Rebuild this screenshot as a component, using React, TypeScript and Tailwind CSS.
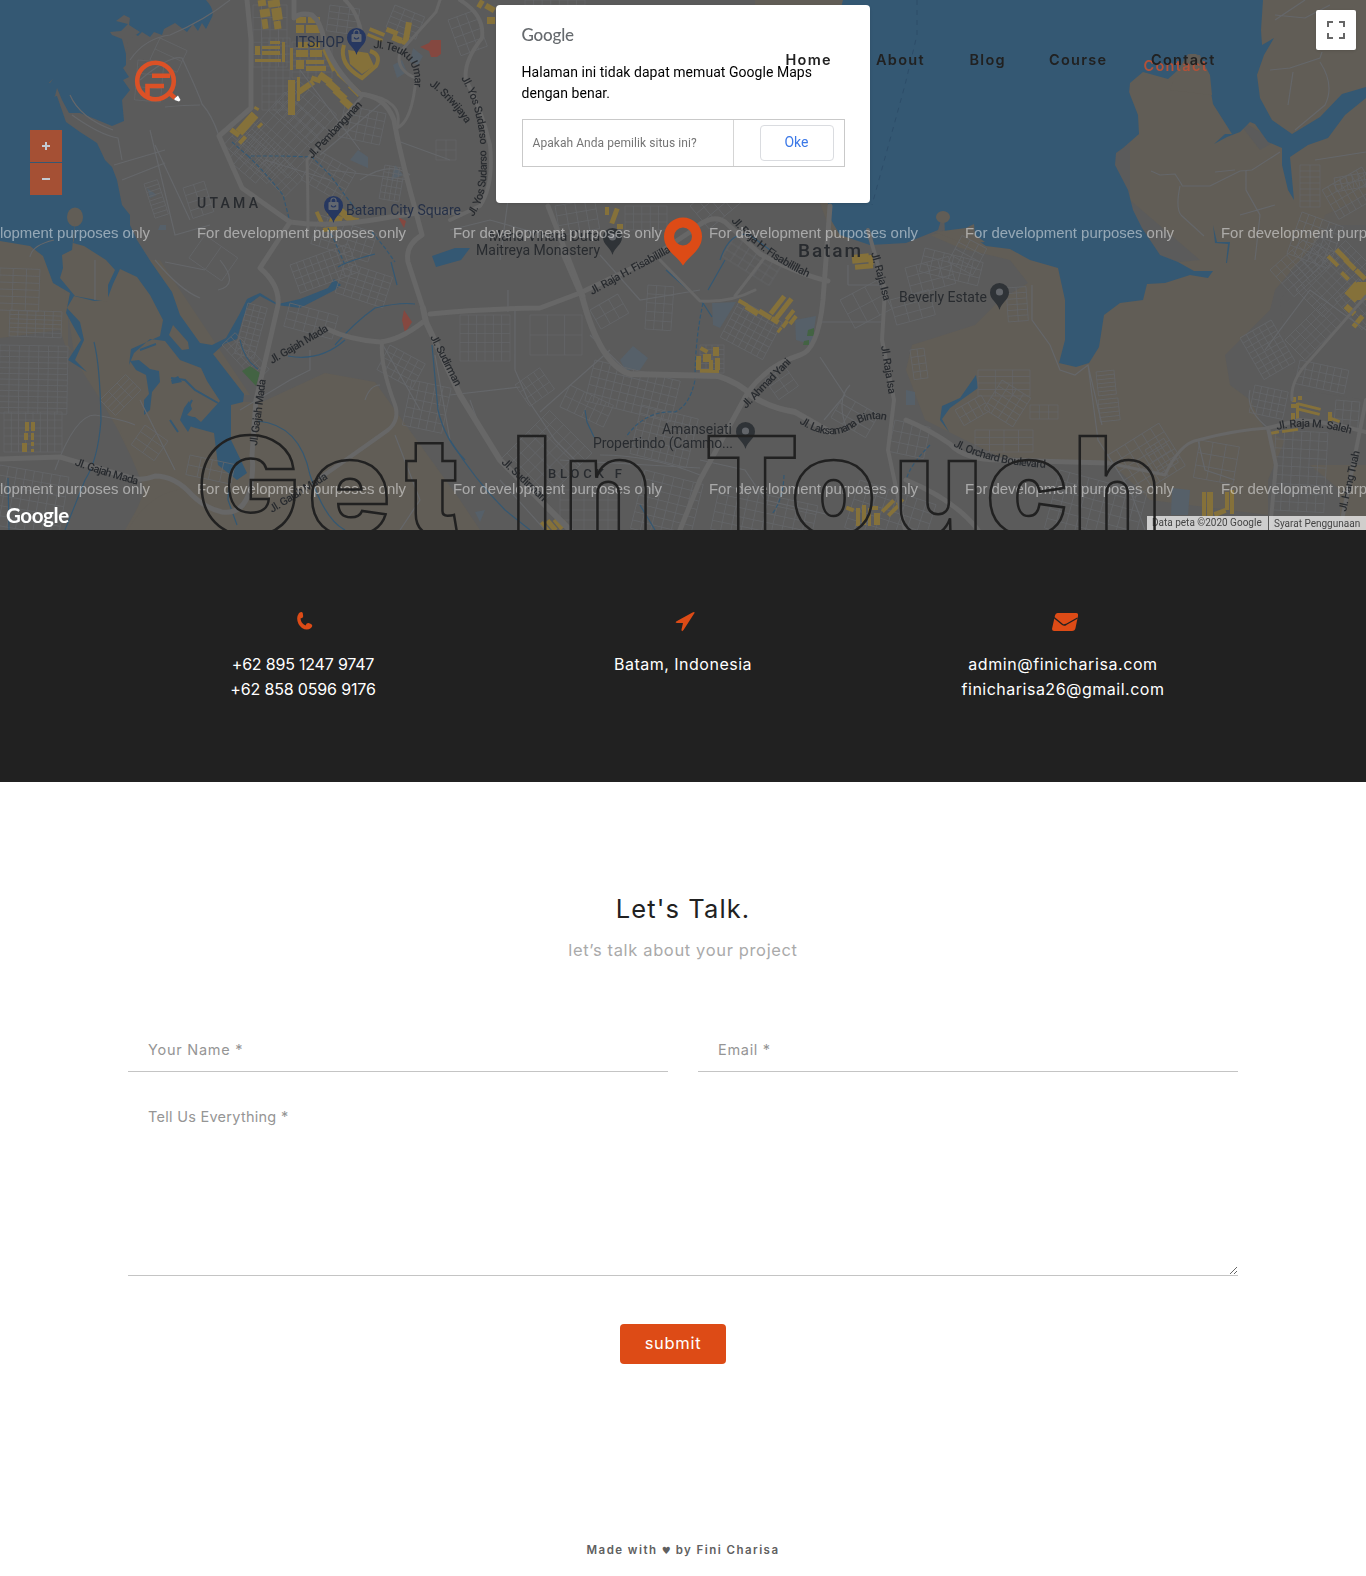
import React from "react";

const WATER = "#345873";
const TAN = "#615d56";
const LAND = "#5b5b5b";
const ROAD = "#676767";
const STREET = "#65676a";
const SHOP = "#85713a";
const INK = "#282b2f";

type BlockGrid = [x: number, y: number, w: number, h: number, angle: number, cols: number, rows: number];

/* Residential street grids: origin, size, rotation, columns, rows. */
const GRIDS: BlockGrid[] = [
  [253, 5, 34, 62, 0, 4, 5], [262, 38, 28, 72, 0, 4, 9], [292, 42, 40, 36, 0, 5, 6],
  [298, 80, 52, 38, 42, 7, 4], [248, 118, 58, 36, 42, 8, 3], [285, 92, 60, 62, 42, 8, 5],
  [228, 160, 34, 36, -50, 3, 5], [275, 150, 40, 26, 45, 6, 3], [318, 150, 44, 34, 30, 5, 5],
  [345, 105, 42, 32, 12, 5, 4], [385, 165, 20, 34, 10, 4, 5], [330, 5, 30, 26, 8, 3, 4],
  [395, 5, 32, 24, 22, 3, 4], [436, 140, 20, 20, 0, 2, 2], [183, 188, 22, 32, -18, 2, 4],
  [144, 184, 14, 36, -18, 1, 8], [320, 215, 60, 30, 18, 7, 4], [205, 235, 40, 28, 35, 2, 1],
  [248, 303, 20, 52, 15, 3, 9], [222, 345, 18, 50, -43, 3, 7], [290, 265, 62, 30, -20, 9, 4],
  [345, 262, 50, 32, 18, 6, 5], [290, 303, 50, 24, 15, 5, 3], [0, 268, 40, 42, 2, 3, 6],
  [10, 310, 52, 26, 2, 6, 6], [0, 345, 68, 68, 1, 7, 12], [4, 412, 58, 40, 0, 8, 5],
  [100, 400, 36, 22, -45, 3, 4], [0, 465, 70, 60, 10, 8, 6], [145, 425, 28, 24, 35, 2, 3],
  [190, 455, 46, 20, 12, 4, 2], [390, 345, 40, 28, 28, 5, 4], [412, 380, 40, 46, 12, 5, 5],
  [460, 315, 50, 46, 0, 6, 5], [530, 315, 52, 40, 0, 3, 2], [515, 385, 30, 26, -35, 4, 3],
  [590, 310, 32, 22, -30, 3, 2], [648, 285, 26, 44, 4, 3, 5], [595, 360, 88, 42, 14, 11, 5],
  [642, 405, 58, 50, 14, 8, 6], [570, 385, 48, 24, 25, 6, 2], [700, 345, 24, 28, 0, 4, 6],
  [740, 300, 48, 42, 28, 7, 6], [765, 380, 24, 24, -35, 2, 3], [645, 470, 60, 60, 14, 6, 7],
  [500, 460, 70, 60, -45, 7, 6], [720, 485, 100, 45, 12, 10, 5], [560, 490, 60, 40, 0, 5, 4],
  [840, 300, 42, 32, -28, 3, 2], [890, 300, 40, 26, -15, 3, 3], [844, 395, 40, 26, 30, 3, 3],
  [895, 420, 36, 32, 12, 4, 3], [905, 268, 45, 28, -15, 4, 3], [948, 262, 30, 28, -62, 4, 3],
  [1006, 288, 20, 34, -4, 2, 6], [978, 370, 52, 26, 0, 3, 4], [1002, 380, 34, 34, 32, 4, 5],
  [955, 410, 30, 18, -30, 4, 2], [1030, 405, 28, 14, 0, 3, 2], [1096, 372, 18, 24, -6, 1, 6],
  [1098, 400, 20, 22, -6, 1, 5], [910, 350, 14, 30, -8, 2, 4], [975, 430, 58, 22, 0, 4, 3],
  [1108, 455, 60, 50, -32, 6, 5], [1060, 470, 90, 60, 15, 9, 6], [1145, 450, 22, 28, -32, 2, 4],
  [1300, 165, 20, 42, 0, 2, 7], [1334, 178, 36, 14, -10, 6, 2], [1322, 190, 46, 34, -30, 7, 4],
  [1302, 212, 44, 44, 20, 6, 5], [1270, 270, 60, 36, -42, 8, 4], [1296, 290, 70, 38, -45, 10, 5],
  [1240, 338, 36, 48, -30, 5, 8], [1285, 340, 52, 28, -45, 7, 4], [1300, 360, 50, 24, 12, 7, 3],
  [1255, 385, 34, 28, 12, 5, 4], [1335, 300, 32, 40, -42, 5, 4], [1200, 440, 40, 38, 10, 3, 3],
  [1276, 430, 52, 80, 3, 6, 9], [1336, 400, 24, 28, 5, 3, 3], [925, 248, 60, 24, 14, 6, 3],
  [1290, 270, 40, 18, -42, 5, 2], [525, 0, 60, 5, 0, 7, 1], [625, 206, 42, 24, 0, 5, 3],
  [555, 206, 40, 30, -10, 4, 3], [690, 206, 50, 30, -40, 5, 3], [735, 236, 55, 24, 32, 6, 3],
  [448, 20, 28, 38, -20, 3, 4], [860, 480, 80, 50, 18, 8, 5],
  [160, 38, 30, 24, 25, 1, 2], [138, 60, 26, 40, 5, 1, 3],
];

function gridPath([, , w, h, , cols, rows]: BlockGrid) {
  let d = "";
  for (let i = 0; i <= cols; i++) d += `M${(w * i) / cols} 0V${h}`;
  for (let j = 0; j <= rows; j++) d += `M0 ${(h * j) / rows}H${w}`;
  return d;
}

type Shop = [x: number, y: number, w: number, h: number, angle?: number];
const SHOPS: Shop[] = [
  [258, 0, 8, 6, -8], [268, 0, 12, 7, -8], [260, 9, 10, 8, -8], [272, 8, 10, 12, -8], [262, 19, 6, 10, -8], [274, 21, 7, 8, -8],
  [255, 46, 5, 9], [262, 46, 18, 3], [262, 51, 18, 4], [255, 59, 26, 3], [270, 41, 10, 3], [282, 42, 3, 20],
  [296, 17, 10, 6], [308, 17, 12, 6], [296, 25, 8, 8], [306, 25, 14, 8], [298, 42, 10, 6], [310, 42, 10, 6], [296, 50, 12, 7], [310, 50, 12, 7],
  [290, 48, 3, 22], [296, 60, 8, 9], [306, 60, 18, 4], [306, 66, 20, 5], [327, 48, 4, 24, -25], [334, 62, 4, 14, -32],
  [288, 80, 7, 34], [297, 77, 3, 24], [297, 84, 18, 6, -35], [311, 77, 10, 5, 20], [318, 75, 14, 7, 35], [326, 83, 14, 7, 42],
  [333, 91, 14, 7, 42], [340, 100, 14, 7, 42], [348, 87, 14, 6, 45], [336, 76, 14, 4, 42], [288, 111, 7, 4],
  [235, 119, 24, 9, -48], [230, 130, 10, 5, 35], [238, 138, 9, 4, -48], [254, 107, 5, 3, 30], [257, 124, 6, 3, -45],
  [369, 30, 16, 4, 22], [367, 36, 16, 3, 22], [386, 29, 12, 5, 22], [392, 36, 10, 6, 22], [404, 22, 6, 23, 10], [398, 40, 10, 4, 20],
  [318, 211, 4, 16, -25], [326, 206, 8, 8, -20], [330, 215, 12, 9, 20], [343, 207, 7, 18, -50], [323, 227, 14, 4, -8], [345, 217, 14, 4, 10],
  [478, 0, 5, 8, 30], [485, 5, 10, 6, 30], [487, 17, 8, 7], [605, 207, 4, 8], [612, 208, 5, 16, 20], [617, 224, 6, 5],
  [738, 301, 10, 4, 30], [745, 307, 14, 6, 32], [758, 312, 14, 5, 32], [771, 318, 8, 5, 32], [775, 294, 5, 22, 38], [781, 296, 5, 26, 38],
  [788, 309, 4, 12, 38], [783, 320, 4, 8, 38], [791, 315, 4, 10, 38], [778, 327, 3, 6, 38],
  [700, 348, 8, 4, 30], [703, 354, 8, 8], [713, 347, 6, 9], [696, 356, 5, 14], [709, 360, 4, 13], [715, 358, 5, 12], [700, 369, 9, 4], [711, 370, 8, 3],
  [852, 254, 17, 9, -6], [855, 264, 18, 5, -5], [868, 255, 5, 10, -10],
  [25, 422, 4, 9], [31, 422, 4, 9], [24, 433, 4, 7], [31, 433, 3, 7], [22, 443, 5, 9], [31, 442, 3, 4], [31, 449, 3, 3],
  [543, 521, 4, 12, -40], [549, 519, 5, 13, -40], [556, 518, 5, 12, -40], [563, 520, 4, 8, -40],
  [846, 507, 8, 4, 20], [856, 508, 4, 18], [862, 505, 4, 20], [868, 508, 3, 18], [872, 506, 6, 4], [874, 513, 6, 12], [880, 504, 16, 4, -45], [886, 508, 16, 4, -45], [896, 500, 8, 4, -45],
  [1202, 492, 4, 24], [1207, 492, 6, 24], [1225, 492, 4, 18], [1230, 490, 4, 24], [1214, 510, 12, 5, -20],
  [1291, 404, 5, 4], [1296, 403, 3, 18], [1297, 405, 24, 3, 14], [1296, 410, 24, 3, 14], [1291, 413, 4, 9], [1292, 397, 4, 5], [1298, 396, 4, 4], [1328, 412, 4, 9], [1328, 418, 12, 3, 20], [1271, 431, 8, 3, -10], [1282, 429, 16, 3, -8],
  [1326, 259, 14, 4, 45], [1334, 253, 16, 5, 45], [1343, 262, 14, 5, 45], [1354, 272, 13, 5, 45], [1347, 285, 16, 14, -48], [1357, 282, 10, 18, 0], [1347, 304, 6, 12, -48], [1351, 319, 14, 5, -50], [1340, 274, 10, 4, 45],
];

const MAJOR_ROADS: [string, number][] = [
  ["M247 0L251 40L251 108L219 136L242 188L290 222Q330 228 385 218T460 214", 5],
  ["M294 0V18Q300 12 312 15Q321 22 324 40Q332 68 360 94Q385 96 394 120Q399 150 414 205L422 235Q405 245 408 262L423 308", 5],
  ["M345 0Q358 12 362 36", 4],
  ["M290 222L260 268Q280 285 278 305L270 340L256 400L252 455Q254 470 250 490Q243 515 222 512Q205 508 192 495Q175 476 155 476Q140 482 128 477L60 457L0 459", 5],
  ["M327 329Q350 340 380 342Q400 340 423 322", 5],
  ["M423 308L426 322L460 395L500 460L570 530", 6],
  ["M430 314Q480 309 540 308L580 293L645 262L690 232Q712 212 725 222L760 254Q800 275 828 281", 5],
  ["M561 248L582 296Q600 365 630 374L718 376Q740 383 752 396Q770 408 795 412L830 432", 6],
  ["M583 296L548 206", 5],
  ["M830 206L823 300Q818 350 800 355Q768 365 748 392L700 480L680 530", 5],
  ["M382 342Q380 365 395 405Q400 420 388 430Q360 450 320 478", 4],
  ["M308 235Q308 190 307 160L350 110L364 94Q405 100 397 128Q412 122 416 78Q395 70 400 52L436 12L440 0", 3],
  ["M460 0Q485 15 482 38Q463 62 466 80Q482 110 490 145Q494 185 480 206L450 220", 4],
  ["M868 230L885 290L882 340L894 400L888 450L905 530", 4],
  ["M906 420Q930 430 950 444Q965 460 1000 460L1108 463", 5],
  ["M906 480Q955 500 978 530", 5],
  ["M1268 428L1276 465L1270 530M1366 400L1350 480L1340 530M1268 428L1300 420Q1330 422 1366 432", 4],
  ["M1366 296L1310 360Q1290 380 1292 400", 3],
  ["M1108 463L1165 475Q1180 443 1198 440Q1235 430 1268 428", 3],
  ["M660 260L700 301Q730 303 755 290M735 296L765 257", 3],
];

const MINOR_ROADS = [
  "M130 60Q145 38 170 35Q205 20 230 0M140 80Q170 55 182 58Q198 92 202 104Q212 115 219 136M165 107Q185 105 200 105",
  "M72 115Q100 135 118 138L122 160M114 165L165 150M122 180L165 163M150 130L175 235L210 225M155 145L190 220",
  "M70 95Q80 118 113 130M30 257Q32 245 54 240M155 260Q180 290 200 298M205 270L165 262M220 260Q240 285 218 290",
  "M320 155L385 100M330 170L410 180M300 70L360 150M265 160L330 180M395 140L450 160M360 180Q390 160 410 175",
  "M515 310V370L528 400L555 440L580 465M540 412L610 350M628 372L590 335M450 395L520 387M470 400L480 428",
  "M508 312V290M500 260L508 200M450 230L490 220L560 240M600 255L640 300L700 290",
  "M820 357L845 395L824 420M822 322H885M848 285H885M848 285V265M850 385Q835 400 848 432",
  "M1151 171L1160 175L1175 174Q1183 186 1182 186L1210 186L1240 171L1252 170L1280 152M1180 186Q1175 210 1182 216L1204 236M1246 170L1246 190L1260 215L1255 260M1215 172L1235 170M1240 215L1275 205M1315 160L1366 152",
  "M1275 20L1305 0M1275 15L1305 18L1330 5M1270 70L1290 68L1320 58L1322 52M1293 72L1288 105M1320 62Q1335 85 1325 105L1295 130",
  "M1032 285V320L1050 345L1060 370L1075 375L1088 365L1102 425M1088 365L1098 440L1130 490L1145 530",
  "M1198 440L1205 470L1235 480M1250 390Q1245 410 1268 428M1265 350L1310 290L1366 330",
  "M700 460L745 470L765 500L830 515M560 460L700 468M500 480L545 530M600 455Q650 455 700 475",
  "M55 470Q75 415 95 415Q125 420 135 425M95 260V300M140 400L160 440L175 470M240 410L290 380L310 370V350",
  "M365 400Q370 385 380 385M380 340L420 410M435 355L450 440M395 435L420 500L400 530",
];

const STREAMS: { d: string; dashed?: boolean }[] = [
  { d: "M232 142L248 156L283 156L312 157L330 175L356 210M248 156Q265 172 283 195L290 222", dashed: true },
  { d: "M328 228L335 242L345 265M372 232L385 248L395 262", dashed: true },
  { d: "M335 345Q355 322 375 308Q400 302 415 304" },
  { d: "M288 356Q320 362 345 340" },
  { d: "M240 340Q244 360 258 369M258 421Q300 425 310 475Q325 520 345 530" },
  { d: "M94 342Q100 365 101 420Q98 460 85 480L65 530" },
  { d: "M432 345L438 410Q445 440 465 460" },
  { d: "M666 270L703 303M585 410L587 422L594 437M708 290L725 260" },
  { d: "M703 303Q695 340 695 380Q690 405 675 412Q645 410 626 437", dashed: true },
  { d: "M703 303L712 317M720 260Q730 230 750 235L770 250" },
  { d: "M450 440Q475 480 505 510L530 530" },
  { d: "M930 445Q910 465 906 480M784 475Q783 500 772 514", dashed: true },
  { d: "M640 505L655 530M230 465L228 500L237 525M8 478L9 530" },
  { d: "M338 267Q345 262 375 254M391 262L397 285" },
];

function PlacePin({ x, y, color, shop = false }: { x: number; y: number; color: string; shop?: boolean }) {
  return (
    <g transform={`translate(${x} ${y})`}>
      <path d="M0 27C-2 19 -9.500 17 -9.500 9.500A9.500 9.500 0 0 1 9.500 9.500C9.500 17 2 19 0 27Z" fill={color} />
      {shop ? (
        <g>
          <rect x={-5} y={6} width={10} height={8} rx={1} fill="#62676f" />
          <path d="M-2.500 6V4.500a2.500 2.500 0 0 1 5 0V6" fill="none" stroke="#62676f" strokeWidth={1.200} />
          <path d="M-2.500 9.500Q0 12.500 2.500 9.500" fill="none" stroke={color} strokeWidth={1.200} />
        </g>
      ) : (
        <circle cx={0} cy={9} r={3.600} fill="#62656a" />
      )}
    </g>
  );
}

const STREET_LABELS: { text: string; d: string; len: number }[] = [
  { text: "Jl. Teuku Umar", d: "M373 48Q425 50 412 98", len: 66 },
  { text: "Jl. Sriwijaya", d: "M429 85Q448 98 466 124", len: 54 },
  { text: "Jl. Yos Sudarso", d: "M461 78Q477 105 480 142", len: 70 },
  { text: "Jl. Yos Sudarso", d: "M473 217Q490 195 486 150", len: 70 },
  { text: "Jl. Pembangunan", d: "M312 159L363 105", len: 74 },
  { text: "Jl. Gajah Mada", d: "M272 364L330 330", len: 66 },
  { text: "Jl. Gajah Mada", d: "M257 446L266 379", len: 67 },
  { text: "Jl. Gajah Mada", d: "M74 465Q110 478 139 485", len: 66 },
  { text: "Jl. Gajah Mada", d: "M272 513L329 478", len: 66 },
  { text: "Jl. Sudirman", d: "M430 337L456 388", len: 56 },
  { text: "Jl. Sudirman", d: "M501 463L544 503", len: 57 },
  { text: "Jl. Raja H. Fisabilillah", d: "M592 295L678 248", len: 96 },
  { text: "Jl. Raja H. Fisabilillah", d: "M731 221Q762 257 809 278", len: 96 },
  { text: "Jl. Raja Isa", d: "M871 253L884 302", len: 50 },
  { text: "Jl. Raja Isa", d: "M881 346L889 396", len: 49 },
  { text: "Jl. Ahmad Yani", d: "M746 409L792 362", len: 65 },
  { text: "Jl. Laksamana Bintan", d: "M799 423Q833 445 858 424Q872 416 889 421", len: 93 },
  { text: "Jl. Orchard Boulevard", d: "M953 446Q990 465 1047 468", len: 96 },
  { text: "Jl. Raja M. Saleh", d: "M1277 430Q1310 422 1351 434", len: 75 },
  { text: "Jl. Hang Tuah", d: "M1346 512L1360 451", len: 62 },
];

const WATERMARK_X = [-59, 197, 453, 709, 965, 1221];

function CityMap() {
  return (
    <svg className="block h-[530px] w-[1366px]" viewBox="0 0 1366 530" aria-label="Batam">
      <rect width={1366} height={530} fill={LAND} />

      {/* undeveloped land */}
      <g fill={TAN}>
        <path d="M0 240H45L68 260V345L75 355L100 385L140 430L165 475L200 490L250 530H125L145 495L140 475L118 430L75 355L65 345L60 330L0 338Z" />
        <path d="M60 260H160L250 395H232V475L240 530H128L145 490L120 430L75 360Z" />
        <path d="M232 402H262L325 373L375 382L395 410L460 500L480 530H128Q150 490 190 488L232 500Z" />
        <path d="M755 0H845V5H755ZM820 203H835L850 240L832 236Z" />
        <path d="M930 235L962 228L985 245L1030 250L1100 270L1200 260L1130 200V60H1190L1260 150L1366 90V225L1330 225L1275 290L1270 310L1240 340L1225 355L1230 385L1250 400L1265 430L1285 440L1268 480V515L1150 500L1110 462L1000 457L965 440L925 420L906 370L912 345L975 325L1000 300L1028 283L1010 260L960 248Z" />
        <path d="M1240 0H1366V100L1290 150L1240 120Z" />
        <path d="M1310 465H1366V530H1340V490Z" />
      </g>
      <path d="M1366 195L1325 215L1310 260L1280 300L1285 340L1300 390L1366 400Z" fill={LAND} opacity={0.5} />

      {/* sea and lagoons */}
      <g fill={WATER}>
        <path d="M0 0H206Q215 10 212 17L206 29L202 23L198 31L193 24L187 32L175 23L164 29L162 35L154 32L150 37L142 32L138 36L133 33L122 38L126 48V65L123 68L129 77L123 80L130 90L122 100L124 121L112 126L95 119L80 113H69L62 100L57 88L55 96L42 103L40 90L36 88L35 83L42 80L50 83L53 79L45 86L48 98L57 96L66 122L80 132L97 143L105 160L112 167L117 180L122 205L130 215V225L137 240L151 262L172 292L180 315L200 343L212 345L226 338L239 315L247 299L260 293L278 304L300 299L328 288L334 279L341 285L335 290L300 308L277 305L260 296L249 304L243 318L237 339L224 344L213 354L244 394L243 402L231 405V440L247 473L237 480L218 465L214 433L192 427Q175 415 195 417L201 422L220 401L207 381L201 368L180 360L165 341L150 339L134 353L129 365L131 349L160 336L163 320L150 295L137 277L120 269L113 284L107 300L94 301L74 296L67 308L80 322L84 340L75 360L87 372L68 360L81 340L66 313L70 293L53 283L43 256L30 246L0 241Z" />
        <path d="M130 361L139 360L150 369L159 371L160 382L152 392L150 410L144 415V400L149 394L146 375L136 370ZM171 380L178 376L182 382L172 384ZM188 385L216 402L202 393ZM184 408L189 401L192 409L187 415L195 418L188 432L180 420Z" />
        <path d="M843 0H1263L1261 30L1262 45L1274 38L1264 55L1257 75L1260 98L1272 120L1292 134L1320 117L1342 94L1366 87V98L1345 115L1328 138L1308 145L1290 157L1294 200L1288 190L1282 165L1282 148L1268 142L1255 124L1250 122L1240 132L1227 137L1214 144L1225 134H1232L1213 104L1208 75L1200 55L1188 54L1178 70L1168 79L1143 72L1130 83L1129 92L1138 115L1139 134L1123 148L1116 153L1115 165L1128 190L1133 210L1142 228L1160 255L1178 262L1194 271H1213L1208 278L1190 275L1165 283L1147 284L1143 300L1120 303L1104 315L1099 347L1089 363L1076 367L1059 363L1065 340V300L1058 268L1030 260L1010 249L986 246L966 232L945 235L944 211L938 230L906 243L870 245L840 235L828 215V203L833 40Z" />
        <path d="M1213 225L1217 242H1230L1227 263H1226L1228 244L1215 243ZM976 375L978 388L950 408L942 419L949 432L940 420L942 406L960 398ZM432 256L455 248H470L461 260L436 267Z" />
      </g>
      <g fill={TAN}>
        <path d="M112 35L110 32L121 31L128 24L116 21L124 15L130 18L129 25L140 32L133 37L128 42L126 54L122 39Z" fill={LAND} />
        <ellipse cx={75} cy={217} rx={8} ry={9.500} />
        <path d="M75 221L74 240L73 243L84 246L106 260L115 270L108 285L108 302L75 296L60 278L63 268L62 255L72 250Z" />
        <path d="M173 325L188 342L189 349L182 350L169 335Z" />
        <ellipse cx={943} cy={217} rx={7} ry={6} />
        <path d="M935 232L966 228L974 224L975 235L985 242L965 244Z" />
        <path d="M1173 82L1187 62L1190 54H1196L1202 60L1210 75L1212 95L1170 90Z" />
      </g>
      <g fill="none" stroke={WATER} strokeWidth={2}>
        <path d="M140 350L156 344M171 378L185 380L195 390L218 403M170 420L178 432M192 400L187 410" />
      </g>

      {/* ponds and civic blocks */}
      <g fill="#566069">
        <path d="M393 65L402 60L407 72L397 78ZM413 48L423 56L418 65L410 62ZM358 150L368 157L368 168L350 160ZM395 165L403 175L391 180ZM147 188L157 195L150 198ZM160 225H166V230H158Z" />
        <path d="M620 360L633 346L648 358L640 370L625 370ZM712 303L736 302L720 328L713 325ZM795 320L816 316L812 345L796 340ZM1172 488L1190 490L1188 515H1171ZM906 390L915 392V405H906ZM475 512L485 510L480 522Z" />
      </g>
      <path d="M404 310L412 322L405 333L402 320Z M420 47L429 43L431 40H441V54L437 57H431L429 51Z M398 217L406 221L404 228Z" fill="#854840" />

      <g fill="none" stroke={STREET} strokeWidth={0.9} opacity={0.85}>
        {GRIDS.map((g, i) => (
          <path key={i} d={gridPath(g)} transform={`translate(${g[0]} ${g[1]}) rotate(${g[4]})`} />
        ))}
      </g>
      <path d="M242 371L250 366L260 373L256 386Z M808 330L814 328V336H807ZM804 341L809 340V345H803Z" fill="#436343" />
      <g fill={SHOP}>
        {SHOPS.map(([x, y, w, h, a = 0], i) => (
          <rect key={i} x={x} y={y} width={w} height={h} transform={`rotate(${a} ${x + w / 2} ${y + h / 2})`} />
        ))}
        <path d="M348 50L368 53L374 66L362 74L350 64Z" />
      </g>
      <path d="M344 45Q338 64 362 78L376 66Q382 55 370 51" fill="none" stroke={SHOP} strokeWidth={4} />

      <g fill="none" stroke={STREET} strokeWidth={1.200}>
        {MINOR_ROADS.map((d, i) => <path key={i} d={d} />)}
      </g>
      <g fill="none" stroke={WATER} strokeWidth={1.200}>
        {STREAMS.map(({ d, dashed }, i) => <path key={i} d={d} strokeDasharray={dashed ? "4 2" : undefined} />)}
      </g>
      <g fill="none" stroke={ROAD} strokeLinecap="round" strokeLinejoin="round">
        {MAJOR_ROADS.map(([d, w], i) => <path key={i} d={d} strokeWidth={w} />)}
      </g>
      <path d="M917 0V35L905 85L872 205" fill="none" stroke="#2d4d69" strokeDasharray="5 5" />

      {/* street names */}
      <g fontFamily="Roboto, sans-serif" fontSize={11} fontWeight={500} fill={INK}>
        {STREET_LABELS.map((l, i) => (
          <g key={i}>
            <path id={`street-${i}`} d={l.d} fill="none" />
            <text textLength={l.len}>
              <textPath href={`#street-${i}`} textLength={l.len}>{l.text}</textPath>
            </text>
          </g>
        ))}
      </g>

      {/* places */}
      <PlacePin x={356.500} y={28} color="#263760" shop />
      <PlacePin x={333.500} y={196} color="#263760" shop />
      <PlacePin x={612.500} y={228} color="#2f3337" />
      <PlacePin x={745.500} y={422} color="#2f3337" />
      <PlacePin x={999.500} y={283} color="#2f3337" />
      <g fontFamily="Roboto, sans-serif" fontSize={14} fill="#253047">
        <text x={295} y={47} textLength={49}>ITSHOP</text>
        <text x={346} y={215} textLength={115}>Batam City Square</text>
      </g>
      <g fontFamily="Roboto, sans-serif" fontSize={14} fill={INK}>
        <text x={489} y={241} textLength={111}>Maha Vihara Duta</text>
        <text x={476} y={255} textLength={124}>Maitreya Monastery</text>
        <text x={662} y={434} textLength={70}>Amansejati</text>
        <text x={593} y={448} textLength={140}>Propertindo (Cammo...</text>
        <text x={899} y={302} textLength={88}>Beverly Estate</text>
      </g>
      <g fontFamily="Roboto, sans-serif" fontWeight={500} fill={INK}>
        <text x={197} y={208} fontSize={14} textLength={61}>UTAMA</text>
        <text x={548} y={478} fontSize={13} textLength={74}>BLOCK F</text>
        <text x={798} y={257} fontSize={19} textLength={63}>Batam</text>
      </g>

      <g fontFamily="Liberation Sans, sans-serif" fontSize={15} fill="#fff" fillOpacity={0.48}>
        {[238, 494].map((y) =>
          WATERMARK_X.map((x) => (
            <text key={`${x}-${y}`} x={x} y={y} textLength={209} lengthAdjust="spacingAndGlyphs">For development purposes only</text>
          )),
        )}
      </g>

      {/* location marker */}
      <path fillRule="evenodd" fill="#dd4b16" d="M683 265.500C677 256 664 250 664 236.500A19 19 0 0 1 702 236.500C702 250 689 256 683 265.500ZM683 227.500a9 9 0 1 0 0 18a9 9 0 0 0 0-18Z" />
    </svg>
  );
}

function BrandLogo() {
  return (
    <svg className="h-[46px] w-[50px]" viewBox="0 0 50 46" fill="none">
      <circle cx={21.500} cy={22} r={18.300} stroke="#dc5126" strokeWidth={4.600} />
      <path d="M36 16.800H18M30 27H13.500V37" stroke="#dc5126" strokeWidth={4.600} />
      <path d="M34 33L41 39" stroke="#dc5126" strokeWidth={4.500} />
      <path d="M40.500 39.500L44 36.500L46.500 41L45 42.500L40.500 41Z" fill="#fff" />
    </svg>
  );
}

function MapDialog() {
  return (
    <div className="absolute left-[496px] top-[5px] h-[198px] w-[374px] rounded-[4px] bg-white pl-[25.500px] pt-[19px] font-[Roboto,sans-serif] shadow">
      <div className="h-[22px] font-[Lato,sans-serif] text-[17px] font-medium leading-[22px] tracking-[-0.2px] text-[#666a6e]">Google</div>
      <p className="mt-[16px] w-[323px] text-[14px] leading-[21px] tracking-[0.04px] text-black">
        Halaman ini tidak dapat memuat Google Maps dengan benar.
      </p>
      <div className="mt-[15px] flex h-[48px] w-[323px] items-center border border-[#c9c9c9]">
        <span className="flex h-full w-[211px] items-center border-r border-[#d5d5d5] pl-[10px] text-[12px] tracking-[0.06px] text-[#757575]">
          Apakah Anda pemilik situs ini?
        </span>
        <button className="ml-[26px] h-[36px] w-[74px] rounded-[4px] border border-[#dadce0] pb-[2px] text-[14px] text-[#3b78e7]">
          Oke
        </button>
      </div>
    </div>
  );
}

function SiteHeader() {
  const links = [
    { label: "Home", place: "left-[785.500px]" },
    { label: "About", place: "left-[876px]" },
    { label: "Blog", place: "left-[969.500px]" },
    { label: "Course", place: "left-[1049px]" },
    { label: "Contact", place: "left-[1151px]" },
  ];
  return (
    <header className="absolute inset-x-0 top-0 font-[Inter,sans-serif] text-[14.5px] font-semibold leading-[20px] tracking-[1.3px] text-[#212121]">
      <div className="absolute left-[134px] top-[59px]"><BrandLogo /></div>
      <nav>
        <span className="absolute left-[1143.500px] top-[56px] text-[#b35138]">Contact</span>
        {links.map((l) => (
          <a key={l.label} className={`absolute top-[50px] whitespace-nowrap ${l.place}`}>{l.label}</a>
        ))}
      </nav>
    </header>
  );
}

function MapSection() {
  return (
    <section className="relative h-[530px] overflow-hidden">
      <CityMap />
      <div className="absolute left-[6px] top-[501px] font-[Lato,sans-serif] text-[20.5px] font-bold leading-[28px] tracking-[-0.4px] text-white">Google</div>
      <div className="absolute bottom-0 right-0 flex h-[14px] w-[219px] items-center bg-white/70 font-[Roboto,sans-serif] text-[10px] text-[#444]">
        <span className="w-[122px] border-r border-[#555] pl-[5px] leading-[14px]">Data peta ©2020 Google</span>
        <span className="pl-[5px]">Syarat Penggunaan</span>
      </div>
      <svg className="absolute inset-0" width={1366} height={530} viewBox="0 0 1366 530">
        <text
          x="197 308 405 480 512 564 640 705 791 894 986 1073"
          y={534.500}
          fontFamily="Inter, sans-serif"
          fontSize={136}
          fontWeight={900}
          fill="none"
          stroke="#212121"
          strokeWidth={2.500}
        >Get In Touch</text>
      </svg>
      <MapDialog />
      <div className="absolute left-[30px] top-[130px] flex w-[32px] flex-col gap-px text-[#c3cad2]">
        {["M6 2V10M2 6H10", "M2 6H10"].map((d) => (
          <button key={d} className="flex h-[32px] items-center justify-center bg-[#a55034]">
            <svg width={12} height={12} viewBox="0 0 12 12" stroke="currentColor" strokeWidth={2}><path d={d} /></svg>
          </button>
        ))}
      </div>
      <button className="absolute right-[10px] top-[10px] flex h-[40px] w-[40px] items-center justify-center rounded-[2px] bg-white shadow">
        <svg width={18} height={18} viewBox="0 0 18 18" fill="none" stroke="#666" strokeWidth={2}>
          <path d="M1 6V1H6M12 1H17V6M17 12V17H12M6 17H1V12" />
        </svg>
      </button>
      <SiteHeader />
    </section>
  );
}

function ContactInfo() {
  return (
    <section className="flex h-[252px] justify-center bg-[#212121] pt-[78px] font-[Inter,sans-serif] text-[16px] leading-[25px] text-white">
      <div className="grid w-[1140px] grid-cols-3 text-center">
        <div>
          <div className="flex h-[44px] items-center justify-center pb-[18px] pl-[4px]">
            <svg width={18} height={20} viewBox="0 0 18 20" fill="#dd4b16">
              <path d="M3 2Q7 -1 7 4Q8 7 4.500 7.500Q5 12.500 9.500 14.500Q11 11 14 12.500Q18 14 15 17Q11 20 6 17Q0 12 1.500 5Z" />
            </svg>
          </div>
          <p className="tracking-[-0.2px]">+62 895 1247 9747</p>
          <p className="tracking-[-0.16px]">+62 858 0596 9176</p>
        </div>
        <div>
          <div className="flex h-[44px] items-center justify-center pb-[16px] pl-[4px]">
            <svg width={20} height={20} viewBox="0 0 20 20" fill="#dd4b16"><path d="M19.500 1L8.500 18Q6.500 20.500 6.500 17.500L8 11H2.500Q-1 10.500 2 9L17.500 0.500Q20 -0.500 19.500 1Z" /></svg>
          </div>
          <p className="tracking-[0.5px]">Batam, Indonesia</p>
        </div>
        <div>
          <div className="flex h-[44px] items-center justify-center pb-[16px] pl-[4px]">
            <svg width={26} height={18} viewBox="0 0 26 18">
              <path d="M5.500 0H24Q26.500 0 26 3L23.500 15Q23 18 20 18H2Q-0.500 18 0.200 15L3 2.500Q3.500 0 5.500 0Z" fill="#dd4b16" />
              <path d="M2 4.500L10.500 11.500Q12 12.500 14 11.500L25.500 5" fill="none" stroke="#212121" strokeWidth={1.400} />
            </svg>
          </div>
          <p className="tracking-[0.58px]">admin@finicharisa.com</p>
          <p className="tracking-[0.5px]">finicharisa26@gmail.com</p>
        </div>
      </div>
    </section>
  );
}

function ContactForm() {
  const field = "border-b border-[#c4c4c4] bg-transparent px-[20px] outline-none placeholder:text-[#959595]";
  return (
    <section className="flex flex-col items-center pt-[109px] font-[Inter,sans-serif]">
      <h2 className="text-[25.5px] font-normal leading-[36px] tracking-[1.1px] text-[#212121]">Let's Talk.</h2>
      <p className="mt-[10px] text-[16.5px] leading-[26px] tracking-[0.64px] text-[#aaa]">let’s talk about your project</p>
      <form className="mt-[66px] flex w-[1110px] flex-col text-[14.5px]">
        <div className="flex gap-[30px]">
          <input className={`h-[43px] min-w-0 flex-1 pb-[2px] tracking-[0.75px] ${field}`} placeholder="Your Name *" />
          <input className={`h-[43px] min-w-0 flex-1 pb-[2px] tracking-[0.7px] ${field}`} placeholder="Email *" />
        </div>
        <textarea className={`mt-[30px] h-[174px] resize-y pt-[4px] tracking-[0.27px] ${field}`} placeholder="Tell Us Everything *" />
        <button type="button" className="ml-[492px] mt-[48px] h-[40px] w-[106px] rounded-[4px] bg-[#dd4b16] pb-[2px] text-[16.5px] tracking-[0.7px] text-white">
          submit
        </button>
      </form>
    </section>
  );
}

export default function App() {
  return (
    <main className="flex h-[1576px] w-[1366px] flex-col overflow-hidden bg-white">
      <MapSection />
      <ContactInfo />
      <ContactForm />
      <footer className="mt-[176px] text-center font-[Inter,sans-serif] text-[11.5px] font-semibold leading-[20px] tracking-[1.45px] text-[#606060]">
        Made with <span className="font-['DejaVu_Sans',sans-serif] text-[10px] tracking-[0.5px]">♥</span> by Fini Charisa
      </footer>
    </main>
  );
}
